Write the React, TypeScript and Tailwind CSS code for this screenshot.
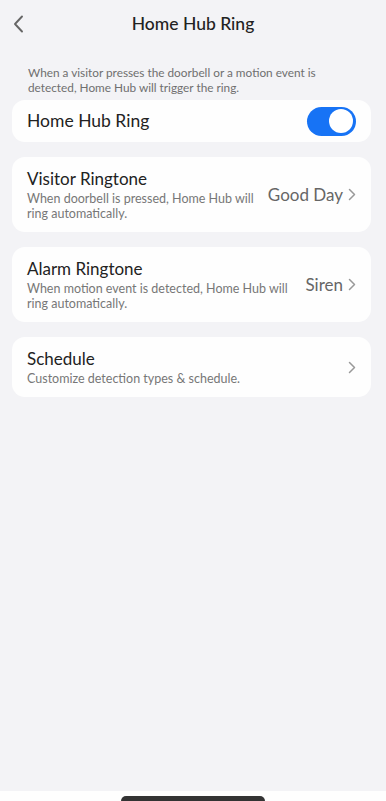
type Row = {
  title: string;
  subtitle: string;
  value?: string;
};

const rows: Row[] = [
  {
    title: "Visitor Ringtone",
    subtitle: "When doorbell is pressed, Home Hub will ring automatically.",
    value: "Good Day",
  },
  {
    title: "Alarm Ringtone",
    subtitle: "When motion event is detected, Home Hub will ring automatically.",
    value: "Siren",
  },
  {
    title: "Schedule",
    subtitle: "Customize detection types & schedule.",
  },
];

function Chevron() {
  return (
    <svg className="ml-[5px] shrink-0" width="8" height="13" viewBox="0 0 8 13" fill="none">
      <path d="M1.5 1.5 L6.5 6.5 L1.5 11.5" stroke="#999" strokeWidth="1.5" strokeLinecap="round" strokeLinejoin="round" />
    </svg>
  );
}

function SettingRow({ row }: { row: Row }) {
  return (
    <div className="flex items-center rounded-[13px] bg-[#fefefe] pl-[15px] pr-[15px] py-[11px]">
      <div className="min-w-0 flex-1">
        <p className="text-[17px] leading-[22px] text-[#222]">{row.title}</p>
        <p className="mt-[1px] text-[12.5px] leading-[15px] text-[#777]">{row.subtitle}</p>
      </div>
      {row.value && (
        <span className="ml-[12px] text-[17px] text-[#666] whitespace-nowrap">{row.value}</span>
      )}
      <Chevron />
    </div>
  );
}

export default function App() {
  return (
    <div
      className="flex h-[801px] w-[386px] flex-col bg-[#f3f3f6]"
      style={{ fontFamily: 'Lato, "Liberation Sans", sans-serif' }}
    >
      {/* header */}
      <div className="relative flex h-[48px] items-center justify-center">
        <svg
          className="absolute left-[12px] top-[15px]"
          width="14"
          height="18"
          viewBox="0 0 14 18"
          fill="none"
        >
          <path d="M10 1.5 L3 9 L10 16.5" stroke="#666" strokeWidth="1.9" strokeLinecap="round" strokeLinejoin="round" />
        </svg>
        <h1 className="text-[17.5px] font-medium text-[#222]">Home Hub Ring</h1>
      </div>

      <div className="flex flex-1 flex-col pl-[12px] pr-[15px]">
        <p className="mt-[17px] px-[16px] text-[11.8px] leading-[15px] text-[#6f6f6f]">
          When a visitor presses the doorbell or a motion event is detected, Home Hub will trigger the ring.
        </p>

        <div className="mt-[5px] flex h-[42px] items-center justify-between rounded-[13px] bg-[#fefefe] pl-[15px] pr-[15px]">
          <span className="text-[17.5px] text-[#222]">Home Hub Ring</span>
          <div className="flex h-[29px] w-[49px] items-center justify-end rounded-full bg-[#1773f5] px-[3px]">
            <div className="h-[24px] w-[24px] rounded-full bg-white" />
          </div>
        </div>

        <div className="mt-[15px] flex flex-col gap-[15px]">
          {rows.map((r) => (
            <SettingRow key={r.title} row={r} />
          ))}
        </div>
      </div>

      <div className="flex h-[10px] items-end justify-center bg-[#fefefe]">
        <div className="h-[5px] w-[144px] rounded-t-full bg-[#333]" />
      </div>
    </div>
  );
}
